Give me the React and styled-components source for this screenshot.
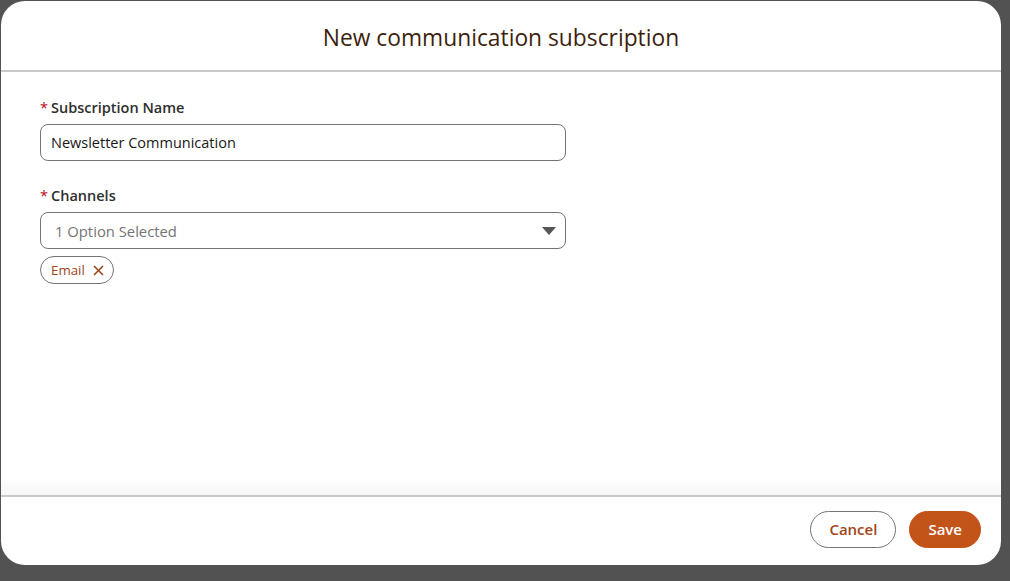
import React, { useState } from 'react';
import styled, { createGlobalStyle } from 'styled-components';

const GlobalStyle = createGlobalStyle`
  html, body {
    margin: 0;
    padding: 0;
    background: #525252;
    font-family: "Open Sans", "Noto Sans", sans-serif;
  }
  * {
    box-sizing: border-box;
  }
`;

const Backdrop = styled.div`
  width: 1010px;
  height: 581px;
  padding: 1px 9px 16px 1px;
  background: #525252;
`;

const Modal = styled.div`
  height: 100%;
  display: flex;
  flex-direction: column;
  background: #fff;
  border-radius: 24px;
  overflow: hidden;
`;

const Header = styled.header`
  height: 71px;
  display: flex;
  align-items: center;
  justify-content: center;
  padding-top: 3px;
  border-bottom: 2px solid #c9c9c9;
`;

const Title = styled.h2`
  margin: 0;
  font-size: 22.8px;
  font-weight: 400;
  color: #3e1f0e;
`;

const Body = styled.div`
  flex: 1;
  padding: 26px 39px;
  position: relative;
  &::after {
    content: '';
    position: absolute;
    left: 0;
    right: 0;
    bottom: 0;
    height: 16px;
    background: linear-gradient(to bottom, rgba(0, 0, 0, 0), rgba(0, 0, 0, 0.04));
  }
`;

const Field = styled.div`
  width: 526px;
  margin-bottom: 25px;
`;

const Label = styled.label`
  display: block;
  font-size: 14.5px;
  font-weight: 600;
  color: #2e2e2e;
  margin-bottom: 6px;
  line-height: 20px;
  &::before {
    content: '*';
    color: #ba0517;
    margin-right: 3px;
    font-weight: 400;
  }
`;

const Input = styled.input`
  width: 100%;
  height: 37px;
  border: 1px solid #747474;
  border-radius: 8px;
  padding: 0 10px;
  font-family: inherit;
  font-size: 14.5px;
  color: #181818;
  outline: none;
`;

const Combo = styled.button`
  width: 100%;
  height: 37px;
  display: flex;
  align-items: center;
  justify-content: space-between;
  border: 1px solid #747474;
  border-radius: 8px;
  padding: 0 9px 0 14px;
  background: #fff;
  font-family: inherit;
  font-size: 14.8px;
  color: #747474;
  cursor: pointer;
`;

const Pills = styled.div`
  display: flex;
  gap: 6px;
  margin-top: 7px;
`;

const Pill = styled.span`
  display: inline-flex;
  align-items: center;
  gap: 8px;
  height: 28px;
  padding: 0 9px 0 10px;
  border: 1px solid #747474;
  border-radius: 14px;
  font-size: 13.3px;
  color: #a0441a;
`;

const PillClose = styled.button`
  border: 0;
  padding: 0;
  background: none;
  display: flex;
  cursor: pointer;
`;

const Footer = styled.footer`
  height: 70px;
  display: flex;
  align-items: center;
  justify-content: flex-end;
  gap: 13px;
  padding: 0 20px 4px 0;
  border-top: 2px solid #c9c9c9;
`;

const Button = styled.button`
  height: 37px;
  padding: 0 18px;
  border-radius: 19px;
  font-family: inherit;
  font-size: 15px;
  font-weight: 600;
  cursor: pointer;
  border: 1px solid ${(p) => (p.$brand ? '#c2541a' : '#747474')};
  background: ${(p) => (p.$brand ? '#c2541a' : '#fff')};
  color: ${(p) => (p.$brand ? '#fff' : '#a0441a')};
`;

export default function App() {
  const [name, setName] = useState('Newsletter Communication');
  const [channels, setChannels] = useState(['Email']);

  return (
    <>
      <GlobalStyle />
      <Backdrop>
        <Modal>
          <Header>
            <Title>New communication subscription</Title>
          </Header>
          <Body>
            <Field>
              <Label>Subscription Name</Label>
              <Input value={name} onChange={(e) => setName(e.target.value)} />
            </Field>
            <Field>
              <Label>Channels</Label>
              <Combo>
                <span>{channels.length} Option Selected</span>
                <svg width="14" height="8" viewBox="0 0 14 8">
                  <path d="M0 0h14L7 8z" fill="#555" />
                </svg>
              </Combo>
              <Pills>
                {channels.map((c) => (
                  <Pill key={c}>
                    {c}
                    <PillClose onClick={() => setChannels(channels.filter((x) => x !== c))}>
                      <svg width="11" height="11" viewBox="0 0 11 11">
                        <path d="M1 1l9 9M10 1l-9 9" stroke="#a0441a" strokeWidth="1.6" />
                      </svg>
                    </PillClose>
                  </Pill>
                ))}
              </Pills>
            </Field>
          </Body>
          <Footer>
            <Button>Cancel</Button>
            <Button $brand>Save</Button>
          </Footer>
        </Modal>
      </Backdrop>
    </>
  );
}
